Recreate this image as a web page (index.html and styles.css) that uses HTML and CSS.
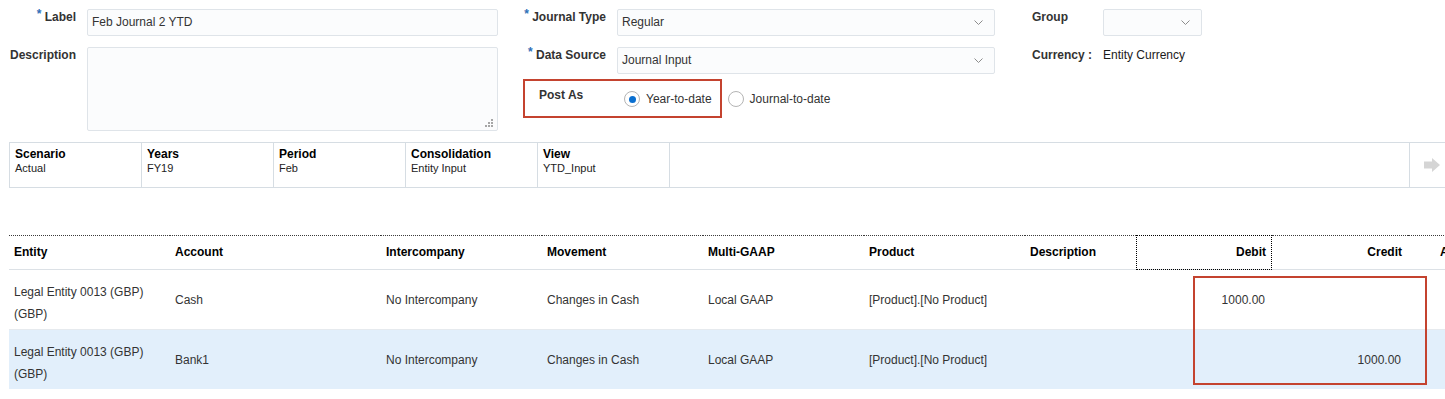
FILE: index.html
```html
<!DOCTYPE html>
<html lang="en">
<head>
  <meta charset="UTF-8">
  <meta name="viewport" content="width=device-width, initial-scale=1.0">
  <title>Journal - Feb Journal 2 YTD</title>
  <link rel="stylesheet" href="styles.css">
</head>
<body>

  <div class="form">
    <div class="fields fields-main">
      <label class="lbl"><span class="req">*</span> Label</label>
      <div class="field">Feb Journal 2 YTD</div>
      <label class="lbl">Description</label>
      <div class="field area">
        <svg class="grip" width="8" height="8" viewBox="0 0 8 8">
          <rect x="6" y="0" width="2" height="2"/>
          <rect x="3" y="3" width="2" height="2"/>
          <rect x="6" y="3" width="2" height="2"/>
          <rect x="0" y="6" width="2" height="2"/>
          <rect x="3" y="6" width="2" height="2"/>
          <rect x="6" y="6" width="2" height="2"/>
        </svg>
      </div>
    </div>

    <div class="fields fields-type">
      <label class="lbl"><span class="req">*</span> Journal Type</label>
      <div class="field select">
        <span>Regular</span>
        <svg class="chev" width="9" height="5" viewBox="0 0 9 5"><path d="M0.5 0.5L4.5 4.5L8.5 0.5"/></svg>
      </div>
      <label class="lbl"><span class="req">*</span> Data Source</label>
      <div class="field select">
        <span>Journal Input</span>
        <svg class="chev" width="9" height="5" viewBox="0 0 9 5"><path d="M0.5 0.5L4.5 4.5L8.5 0.5"/></svg>
      </div>
      <div class="post-row">
        <div class="post-box">
          <span class="post-label">Post As</span>
          <span class="radio-opt"><span class="radio checked"></span>Year-to-date</span>
        </div>
        <span class="radio-opt outside"><span class="radio"></span>Journal-to-date</span>
      </div>
    </div>

    <div class="fields fields-group">
      <label class="lbl">Group</label>
      <div class="field select">
        <span></span>
        <svg class="chev" width="9" height="5" viewBox="0 0 9 5"><path d="M0.5 0.5L4.5 4.5L8.5 0.5"/></svg>
      </div>
      <label class="lbl">Currency :</label>
      <div class="value">Entity Currency</div>
    </div>
  </div>

  <div class="pov">
    <div class="pov-cell"><b>Scenario</b><span>Actual</span></div>
    <div class="pov-cell"><b>Years</b><span>FY19</span></div>
    <div class="pov-cell"><b>Period</b><span>Feb</span></div>
    <div class="pov-cell"><b>Consolidation</b><span>Entity Input</span></div>
    <div class="pov-cell"><b>View</b><span>YTD_Input</span></div>
    <div class="pov-fill"></div>
    <div class="pov-go">
      <svg width="16" height="14" viewBox="0 0 16 14"><path d="M0 3.5h8V0l8 7-8 7v-3.5H0z"/></svg>
    </div>
  </div>

  <div class="grid-wrap">
    <table class="lines">
      <colgroup>
        <col style="width:161px"><col style="width:211px"><col style="width:161px">
        <col style="width:161px"><col style="width:161px"><col style="width:161px">
        <col style="width:111px"><col style="width:136px"><col style="width:136px">
        <col style="width:120px">
      </colgroup>
      <thead>
        <tr>
          <th>Entity</th>
          <th>Account</th>
          <th>Intercompany</th>
          <th>Movement</th>
          <th>Multi-GAAP</th>
          <th>Product</th>
          <th>Description</th>
          <th class="num focus">Debit</th>
          <th class="num">Credit</th>
          <th class="more">Amount</th>
        </tr>
      </thead>
      <tbody>
        <tr>
          <td><div class="entity">Legal Entity 0013 (GBP)<br>(GBP)</div></td>
          <td>Cash</td>
          <td>No Intercompany</td>
          <td>Changes in Cash</td>
          <td>Local GAAP</td>
          <td>[Product].[No Product]</td>
          <td></td>
          <td class="num">1000.00</td>
          <td class="num"></td>
          <td></td>
        </tr>
        <tr class="selected">
          <td><div class="entity">Legal Entity 0013 (GBP)<br>(GBP)</div></td>
          <td>Bank1</td>
          <td>No Intercompany</td>
          <td>Changes in Cash</td>
          <td>Local GAAP</td>
          <td>[Product].[No Product]</td>
          <td></td>
          <td class="num"></td>
          <td class="num">1000.00</td>
          <td></td>
        </tr>
      </tbody>
    </table>
    <div class="callout"></div>
  </div>

</body>
</html>
```

FILE: styles.css
```css
body {
  margin: 0;
  font-family: "Liberation Sans", Arial, sans-serif;
  font-size: 12px;
  color: #333333;
  background-color: #FFFFFF;
  overflow: hidden;
}
.form {
  display: flex;
  align-items: flex-start;
  padding-top: 9px;
}
.fields {
  display: grid;
  row-gap: 11px;
  column-gap: 11px;
  align-items: start;
}
.fields-main {
  grid-template-columns: 76px 411px;
}
.fields-type {
  margin-left: 25px;
  grid-template-columns: 83px 378px;
}
.fields-group {
  margin-left: 37px;
  grid-template-columns: 71px 99px;
  column-gap: 0;
}
.lbl {
  font-weight: bold;
  line-height: 16px;
  color: #333333;
  text-align: right;
  white-space: nowrap;
}
.fields-group .lbl {
  text-align: left;
}
.req {
  color: #2F6FB7;
  position: relative;
  top: -3px;
}
.field {
  box-sizing: border-box;
  height: 27px;
  line-height: 25px;
  padding: 0 4px;
  border: 1px solid #DFE4E9;
  border-radius: 2px;
  background-color: #FBFCFD;
  color: #333333;
}
.area {
  height: 84px;
  display: flex;
  justify-content: flex-end;
  align-items: flex-end;
  padding: 0 4px 3px 0;
}
.grip {
  fill: #A6A6A6;
}
.select {
  display: flex;
  align-items: center;
  justify-content: space-between;
  padding-right: 11px;
}
.chev {
  fill: none;
  stroke: #8C8C8C;
  stroke-width: 1;
}
.value {
  line-height: 16px;
  color: #1A1A1A;
}
.post-row {
  grid-column: 1 / -1;
  display: flex;
  align-items: flex-start;
  margin-top: -6px;
}
.post-box {
  box-sizing: border-box;
  height: 39px;
  display: flex;
  align-items: flex-start;
  border: 2px solid #C4432F;
  padding: 6px 8px 0 14px;
}
.post-label {
  width: 85px;
  font-weight: bold;
  line-height: 16px;
}
.radio-opt {
  display: flex;
  align-items: center;
  line-height: 16px;
  margin-top: 4px;
  white-space: nowrap;
}
.radio-opt.outside {
  margin-top: 12px;
  margin-left: 6px;
}
.radio {
  box-sizing: border-box;
  width: 16px;
  height: 16px;
  margin-right: 6px;
  border: 1px solid #B4B4B4;
  border-radius: 50%;
  background-color: #FFFFFF;
  display: flex;
  align-items: center;
  justify-content: center;
}
.radio.checked::after {
  content: "";
  width: 7px;
  height: 7px;
  border-radius: 50%;
  background-color: #0A6FD0;
}
.pov {
  display: flex;
  box-sizing: border-box;
  height: 46px;
  margin: 11px 0 0 9px;
  border: 1px solid #D6DDE3;
  border-right: none;
}
.pov-cell {
  width: 131px;
  border-right: 1px solid #D6DDE3;
  padding: 4px 5px 0;
  box-sizing: border-box;
  display: flex;
  flex-direction: column;
  width: 132px;
}
.pov-cell b {
  color: #000000;
  line-height: 14px;
}
.pov-cell span {
  font-size: 11px;
  line-height: 15px;
  color: #222222;
}
.pov-fill {
  flex: 1;
}
.pov-go {
  width: 36px;
  box-sizing: border-box;
  border-left: 1px solid #D6DDE3;
  padding-left: 14px;
  display: flex;
  align-items: center;
}
.pov-go svg {
  fill: #D5D5D5;
}
.grid-wrap {
  position: relative;
  margin: 47px 0 0 9px;
}
.lines {
  table-layout: fixed;
  border-collapse: separate;
  border-spacing: 0;
  width: 1519px;
}
.lines th {
  text-align: left;
  font-weight: bold;
  color: #000000;
  line-height: 33px;
  padding: 0 5px;
  border-top: 1px dotted #3A3A3A;
  border-bottom: 1px solid #DCE1E6;
  white-space: nowrap;
  overflow: hidden;
}
.lines th.more {
  padding-left: 32px;
}
.lines th.focus {
  outline: 1px dotted #000000;
  outline-offset: -1px;
}
.lines .num {
  text-align: right;
  padding-right: 6px;
}
.lines td {
  height: 59px;
  padding: 0 5px;
  color: #333333;
  vertical-align: middle;
  white-space: nowrap;
}
.lines td.num {
  padding-right: 7px;
}
.lines tr.selected td {
  background-color: #E2EFFB;
  border-top: 1px solid #E6EAEE;
}
.entity {
  line-height: 22px;
  margin-top: 6px;
}
.callout {
  position: absolute;
  left: 1184px;
  top: 41px;
  width: 234px;
  height: 109px;
  box-sizing: border-box;
  border: 2px solid #C4432F;
}
```
